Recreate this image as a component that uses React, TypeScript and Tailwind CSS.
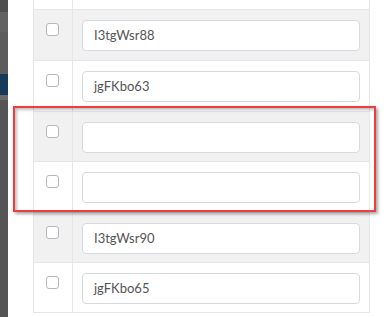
import React from "react";

const rows: { text: string; gray: boolean; h: string }[] = [
  { text: "", gray: false, h: "h-[51px] -mt-[41px]" },
  { text: "I3tgWsr88", gray: true, h: "h-[51px]" },
  { text: "jgFKbo63", gray: false, h: "h-[51px]" },
  { text: "", gray: true, h: "h-[50px]" },
  { text: "", gray: false, h: "h-[51px]" },
  { text: "I3tgWsr90", gray: true, h: "h-[50px]" },
  { text: "jgFKbo65", gray: false, h: "h-[50px]" },
];

function Row({ text, gray, h }: { text: string; gray: boolean; h: string }) {
  return (
    <div
      className={`flex border-b border-[#e3e6ea] ${gray ? "bg-[#f1f1f1]" : "bg-white"} ${h}`}
    >
      <div className="w-[39px] shrink-0 border-r border-[#e3e6ea] pl-[12px] pt-[13px]">
        <div className="h-[13px] w-[13px] rounded-[3px] border border-[#b4b8bd] bg-white" />
      </div>
      <div className="flex-1 pl-[9px] pr-[9px] pt-[10px]">
        <div className="flex h-[31px] items-center rounded-[4px] border border-[#d6dae0] bg-white pl-[11px] text-[13px] text-[#555555]">
          {text}
        </div>
      </div>
    </div>
  );
}

export default function App() {
  return (
    <div
      className="flex h-[317px] w-[392px] overflow-hidden bg-white"
      style={{ fontFamily: "Lato, 'Noto Sans', sans-serif" }}
    >
      <div className="flex w-[8px] shrink-0 flex-col">
        <div className="h-[12px] bg-[#4f4f4f]" />
        <div className="h-[20px] bg-[#626262]" />
        <div className="h-[42px] bg-[#5c5c5c]" />
        <div className="h-[21px] bg-[#163a5c]" />
        <div className="h-[5px] bg-[#6a6a6a]" />
        <div className="flex-1 bg-[#555555]" />
      </div>
      <div className="relative flex-1">
        <div className="ml-[25px] w-[337px] border-x border-[#e3e6ea]">
          {rows.map((r, i) => (
            <Row key={i} text={r.text} gray={r.gray} h={r.h} />
          ))}
        </div>
        <div className="absolute left-[5px] top-[106px] h-[106px] w-[363px] border-2 border-[#f03c3c] shadow-[2px_2px_3px_rgba(0,0,0,0.35),inset_2px_2px_3px_rgba(0,0,0,0.25)]" />
      </div>
    </div>
  );
}
